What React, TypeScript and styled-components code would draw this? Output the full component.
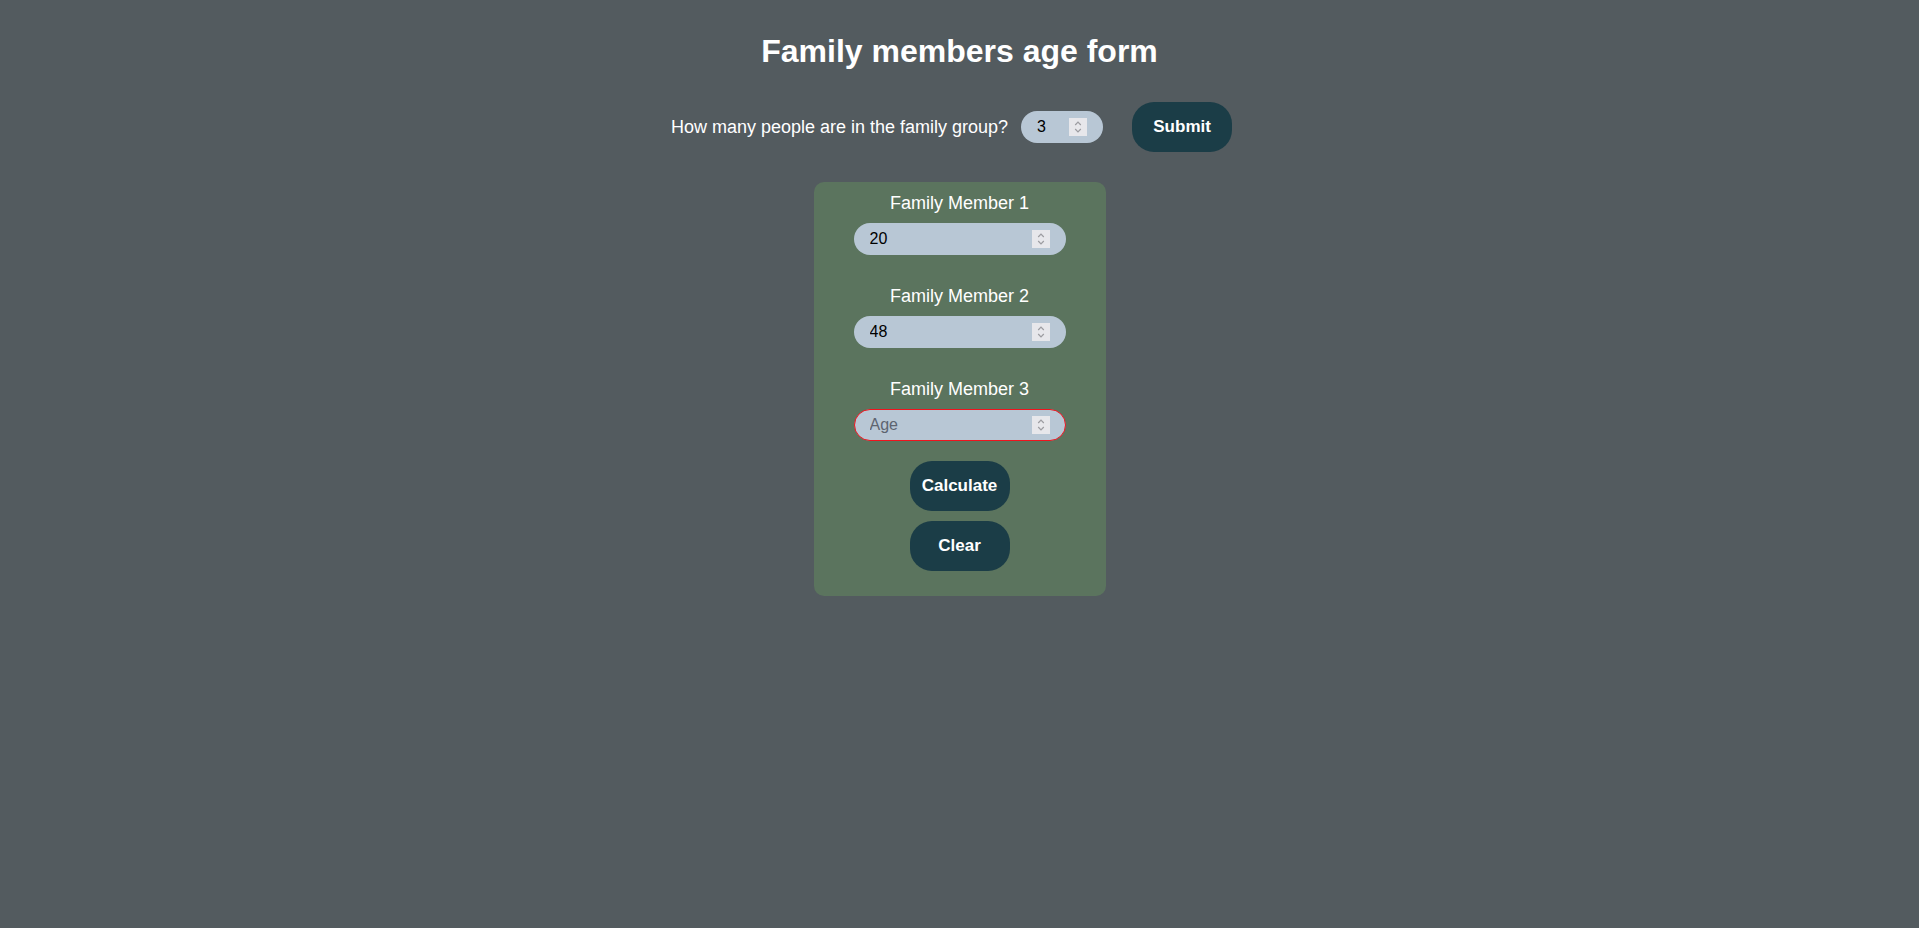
import React, { useState } from "react";
import styled, { createGlobalStyle } from "styled-components";

const GlobalStyle = createGlobalStyle`
  html, body {
    margin: 0;
    padding: 0;
    background: #535b5f;
    font-family: "Liberation Sans", Arial, sans-serif;
    color: #ffffff;
  }
  input[type="number"]::-webkit-inner-spin-button,
  input[type="number"]::-webkit-outer-spin-button {
    -webkit-appearance: none;
    margin: 0;
  }
  input[type="number"] { -moz-appearance: textfield; }
`;

const Page = styled.main`
  min-height: 100vh;
  display: flex;
  flex-direction: column;
  align-items: center;
  padding-top: 33px;
  box-sizing: border-box;
`;

const Title = styled.h1`
  margin: 0;
  font-size: 32px;
  line-height: 37px;
  font-weight: 700;
  color: #ffffff;
`;

const CountRow = styled.form`
  margin-top: 32px;
  display: flex;
  align-items: center;
  height: 50px;
  padding-right: 16px;
`;

const CountLabel = styled.label`
  font-size: 18px;
  line-height: 21px;
  margin-right: 13px;
`;

const Pill = styled.div<{ $width: number; $invalid?: boolean }>`
  box-sizing: border-box;
  width: ${(p) => p.$width}px;
  height: 32px;
  border-radius: 16px;
  background: #b8c7d5;
  border: 1px solid ${(p) => (p.$invalid ? "#f0141e" : "transparent")};
  display: flex;
  align-items: center;
  padding: 0 15px;
`;

const NumberInput = styled.input`
  flex: 1;
  min-width: 0;
  border: none;
  outline: none;
  background: transparent;
  font-family: "Liberation Sans", Arial, sans-serif;
  font-size: 16px;
  color: #000000;
  padding: 0;
  &::placeholder {
    color: #5d6470;
  }
`;

const Spinner = styled.span`
  width: 18px;
  height: 18px;
  background: #e7e7eb;
  display: flex;
  align-items: center;
  justify-content: center;
  flex-shrink: 0;
`;

const SubmitButton = styled.button`
  margin-left: 29px;
`;

const Button = styled.button`
  width: 100px;
  height: 50px;
  border: none;
  border-radius: 22px;
  background: #1b3d47;
  color: #ffffff;
  font-family: "Liberation Sans", Arial, sans-serif;
  font-weight: 700;
  font-size: 17px;
  cursor: pointer;
  padding: 0;
`;

const Card = styled.section`
  margin-top: 30px;
  width: 292px;
  box-sizing: border-box;
  background: #5b745e;
  border-radius: 10px;
  padding: 11px 0 25px;
  display: flex;
  flex-direction: column;
  align-items: center;
`;

const Member = styled.div`
  display: flex;
  flex-direction: column;
  align-items: center;
  & + & {
    margin-top: 31px;
  }
`;

const MemberLabel = styled.label`
  font-size: 18px;
  line-height: 21px;
  margin-bottom: 9px;
`;

const Actions = styled.div`
  margin-top: 20px;
  display: flex;
  flex-direction: column;
  align-items: center;
  gap: 10px;
`;

const SpinIcon = () => (
  <svg width="10" height="14" viewBox="0 0 10 14" fill="none">
    <path d="M2.2 5 L5 2.2 L7.8 5" stroke="#9b9ba0" strokeWidth="1.2" />
    <path d="M2.2 9 L5 11.8 L7.8 9" stroke="#9b9ba0" strokeWidth="1.2" />
  </svg>
);

const NumberField = ({
  width,
  value,
  placeholder,
  invalid,
  id,
}: {
  width: number;
  value?: string;
  placeholder?: string;
  invalid?: boolean;
  id: string;
}) => {
  const [v, setV] = useState(value ?? "");
  return (
    <Pill $width={width} $invalid={invalid}>
      <NumberInput
        id={id}
        type="number"
        value={v}
        placeholder={placeholder}
        onChange={(e) => setV(e.target.value)}
      />
      <Spinner>
        <SpinIcon />
      </Spinner>
    </Pill>
  );
};

const members = [
  { name: "Family Member 1", age: "20" },
  { name: "Family Member 2", age: "48" },
  { name: "Family Member 3", age: "" },
];

export default function App() {
  return (
    <>
      <GlobalStyle />
      <Page>
        <Title>Family members age form</Title>
        <CountRow onSubmit={(e) => e.preventDefault()}>
          <CountLabel htmlFor="count">How many people are in the family group?</CountLabel>
          <NumberField id="count" width={82} value="3" />
          <SubmitButton as={Button} type="submit">
            Submit
          </SubmitButton>
        </CountRow>
        <Card>
          {members.map((m, i) => (
            <Member key={m.name}>
              <MemberLabel htmlFor={`m${i}`}>{m.name}</MemberLabel>
              <NumberField
                id={`m${i}`}
                width={212}
                value={m.age}
                placeholder="Age"
                invalid={m.age === ""}
              />
            </Member>
          ))}
          <Actions>
            <Button type="button">Calculate</Button>
            <Button type="button">Clear</Button>
          </Actions>
        </Card>
      </Page>
    </>
  );
}
